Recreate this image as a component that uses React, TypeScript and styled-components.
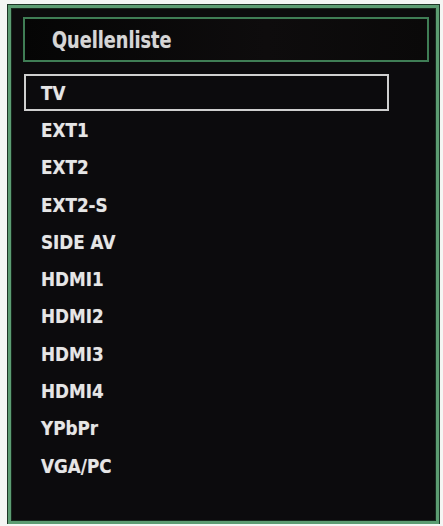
import React from "react";
import styled, { createGlobalStyle } from "styled-components";

const Global = createGlobalStyle`
  html, body {
    margin: 0;
    padding: 0;
    background: #f4f6f4;
  }
  body {
    font-family: "DejaVu Sans", "Liberation Sans", sans-serif;
  }
`;

const Frame = styled.div`
  box-sizing: border-box;
  margin: 5px 0 0 8px;
  width: 431px;
  height: 519px;
  padding: 9px 0 0 12px;
  background: #0c0b0d;
  border: 3px solid #5c9c72;
  outline: 1px solid #1d3626;
  box-shadow: inset 0 0 0 1px #16291d;
  display: flex;
  flex-direction: column;
`;

const Header = styled.div`
  box-sizing: border-box;
  width: 406px;
  height: 45px;
  border: 2px solid #3f7d55;
  background: linear-gradient(90deg, #050505, #0e0c0d 60%, #0a0909);
  display: flex;
  align-items: center;
  padding-left: 27px;
  color: #d6d6d6;
`;

/* condensed lettering: the glyphs are narrowed from the left edge */
const Label = styled.span<{ $size: number; $squeeze: number }>`
  display: inline-block;
  font-size: ${(p) => p.$size}px;
  font-weight: bold;
  white-space: nowrap;
  transform: scaleX(${(p) => p.$squeeze});
  transform-origin: left center;
  text-shadow: 0 0 1px rgba(255, 255, 255, 0.35);
`;

const List = styled.ul`
  list-style: none;
  margin: 12px 0 0 1px;
  padding: 0;
  display: flex;
  flex-direction: column;
`;

const Row = styled.li<{ $active?: boolean }>`
  box-sizing: border-box;
  width: 365px;
  height: 37.3px;
  display: flex;
  align-items: center;
  padding-left: 15px;
  border: 2px solid ${(p) => (p.$active ? "#cfcfcf" : "transparent")};
  color: #e6e6e6;
`;

const sources = [
  "TV",
  "EXT1",
  "EXT2",
  "EXT2-S",
  "SIDE AV",
  "HDMI1",
  "HDMI2",
  "HDMI3",
  "HDMI4",
  "YPbPr",
  "VGA/PC",
];

export default function App() {
  return (
    <>
      <Global />
      <Frame>
        <Header>
          <Label $size={23} $squeeze={0.77}>
            Quellenliste
          </Label>
        </Header>
        <List>
          {sources.map((s, i) => (
            <Row key={s} $active={i === 0}>
              <Label $size={20} $squeeze={0.84}>
                {s}
              </Label>
            </Row>
          ))}
        </List>
      </Frame>
    </>
  );
}
